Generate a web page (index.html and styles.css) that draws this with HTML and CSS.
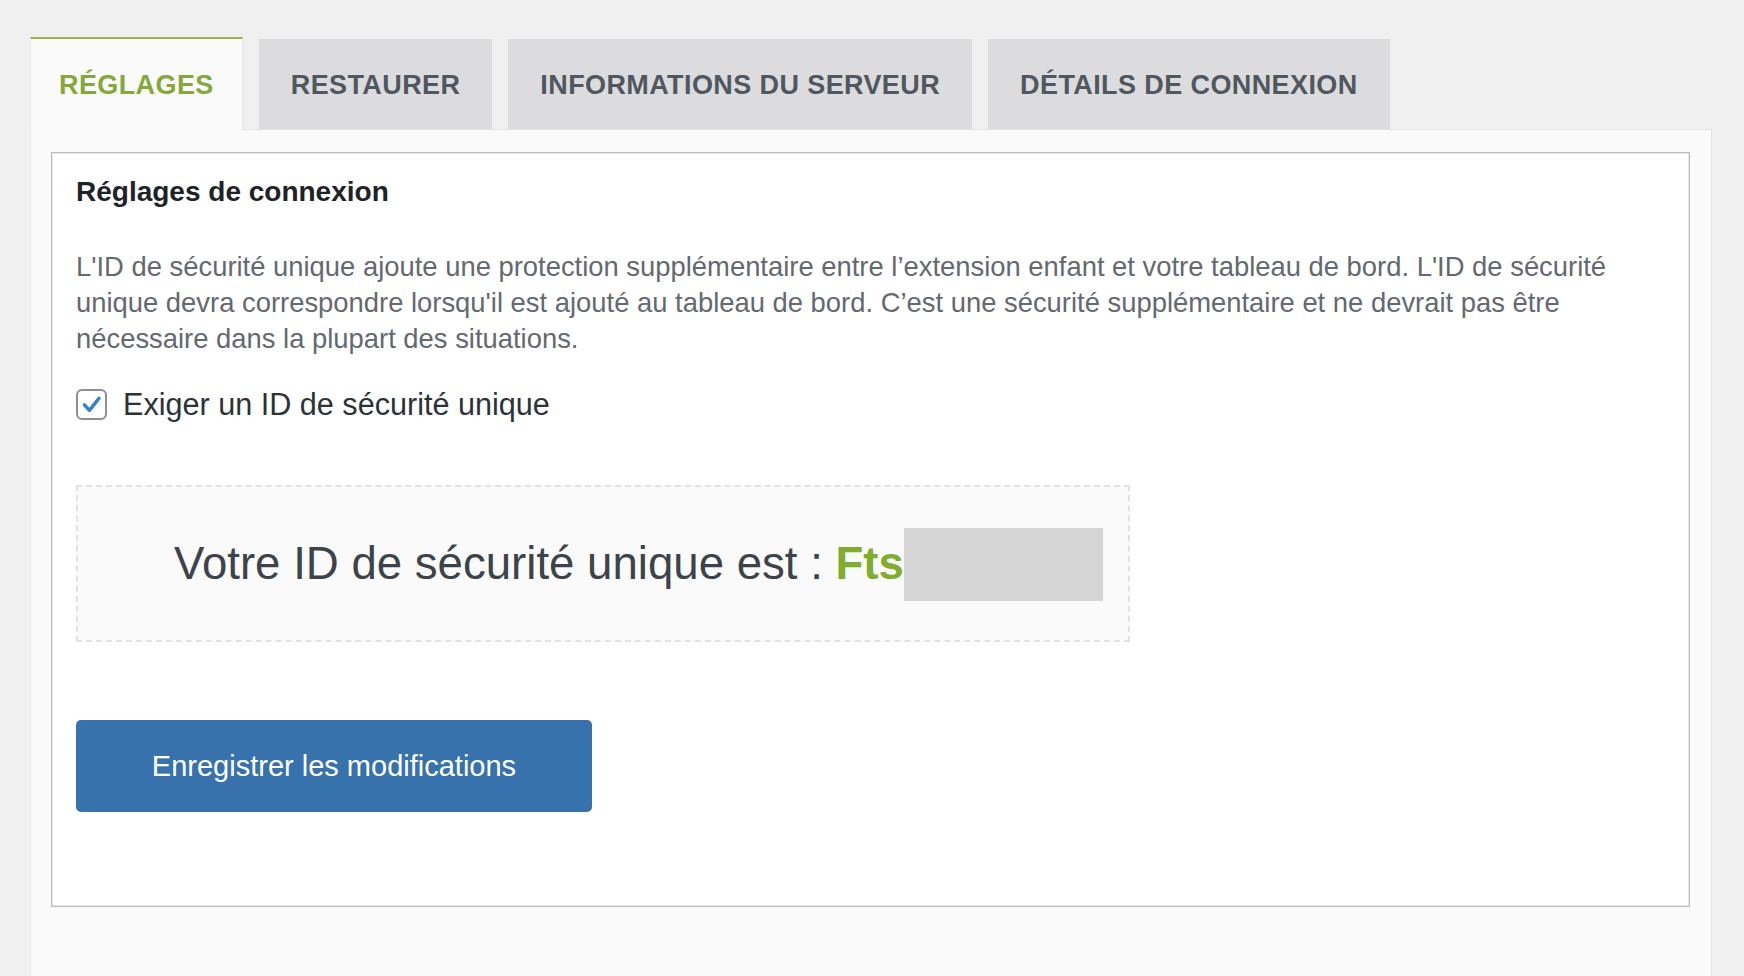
FILE: index.html
```html
<!DOCTYPE html>
<html lang="fr">
<head>
<meta charset="utf-8">
<title>Réglages</title>
<link rel="stylesheet" href="styles.css">
</head>
<body>
<div class="page">
  <nav class="tabs">
    <a class="tab tab-active">RÉGLAGES</a>
    <a class="tab">RESTAURER</a>
    <a class="tab">INFORMATIONS DU SERVEUR</a>
    <a class="tab">DÉTAILS DE CONNEXION</a>
  </nav>
  <div class="panel">
    <div class="box">
      <h3 class="box-title">Réglages de connexion</h3>
      <p class="desc">L'ID de sécurité unique ajoute une protection supplémentaire entre l’extension enfant et votre tableau de bord. L'ID de sécurité unique devra correspondre lorsqu'il est ajouté au tableau de bord. C’est une sécurité supplémentaire et ne devrait pas être nécessaire dans la plupart des situations.</p>
      <label class="check-row">
        <span class="checkbox">
          <svg viewBox="0 0 30 30" width="30" height="30" aria-hidden="true">
            <path d="M6.5 15.5 L12.5 22 L24 7.5" fill="none" stroke="#3582c4" stroke-width="4.2" stroke-linecap="round" stroke-linejoin="round"/>
          </svg>
        </span>
        <span class="check-label">Exiger un ID de sécurité unique</span>
      </label>
      <div class="id-box">
        <span class="id-text">Votre ID de sécurité unique est : <strong class="id-value">Fts</strong></span><span class="id-hidden"></span>
      </div>
      <button class="btn-primary" type="button">Enregistrer les modifications</button>
    </div>
  </div>
</div>
</body>
</html>
```

FILE: styles.css
```css
html, body {
  margin: 0;
  padding: 0;
  height: 100%;
  overflow: hidden;
}

body {
  background: #f0f0f1;
  font-family: "Liberation Sans", Arial, sans-serif;
}

.page {
  padding: 37px 32px 0 30px;
}

.tabs {
  display: flex;
  align-items: flex-end;
  gap: 16px;
}

.tab {
  display: block;
  height: 90px;
  line-height: 92px;
  padding: 0 32px;
  background: #dcdcde;
  color: #50575e;
  font-size: 27px;
  font-weight: 700;
  letter-spacing: 0.4px;
  text-decoration: none;
  white-space: nowrap;
}

.tab-active {
  height: 91px;
  line-height: 93px;
  padding: 0 28px;
  background: #fafafa;
  color: #86a83a;
  border-top: 2px solid #9fb050;
  border-left: 1px solid #e6e6e6;
  border-right: 1px solid #e6e6e6;
  margin-bottom: -1px;
  position: relative;
  z-index: 1;
}

.panel {
  background: #fafafa;
  border: 1px solid #e3e3e3;
  padding: 22px 21px 70px 20px;
}

.box {
  background: #fff;
  border: 1px solid #bcbcbc;
  box-shadow: inset 0 0 0 1px #e6e6e6;
  padding: 22px 24px 94px 24px;
}

.box-title {
  margin: 0;
  font-size: 28px;
  line-height: 34px;
  font-weight: 700;
  color: #1d2327;
}

.desc {
  margin: 40px 0 0;
  font-size: 27.4px;
  line-height: 36px;
  color: #646970;
}

.check-row {
  display: flex;
  align-items: center;
  gap: 16px;
  margin-top: 30px;
}

.checkbox {
  box-sizing: border-box;
  width: 31px;
  height: 31px;
  border: 2px solid #8c8f94;
  border-radius: 6px;
  background: #fff;
  display: flex;
  align-items: center;
  justify-content: center;
}

.checkbox svg {
  width: 25px;
  height: 25px;
}

.check-label {
  font-size: 30.6px;
  line-height: 34px;
  color: #2c3338;
}

.id-box {
  box-sizing: border-box;
  width: 1054px;
  height: 157px;
  margin-top: 64px;
  border: 2px dashed #e2e2e2;
  background: #fafafa;
  display: flex;
  align-items: center;
  padding-left: 96px;
}

.id-text {
  font-size: 45.6px;
  line-height: 52px;
  color: #3c434a;
  white-space: nowrap;
}

.id-value {
  color: #7fad2c;
  font-weight: 700;
}

.id-hidden {
  display: block;
  width: 199px;
  height: 73px;
  background: #d5d5d5;
  margin-top: 2px;
}

.btn-primary {
  display: block;
  width: 516px;
  height: 92px;
  margin-top: 78px;
  border: 0;
  border-radius: 5px;
  background: #3872ad;
  color: #fff;
  font-family: "Liberation Sans", Arial, sans-serif;
  font-size: 29px;
  cursor: pointer;
}
```
